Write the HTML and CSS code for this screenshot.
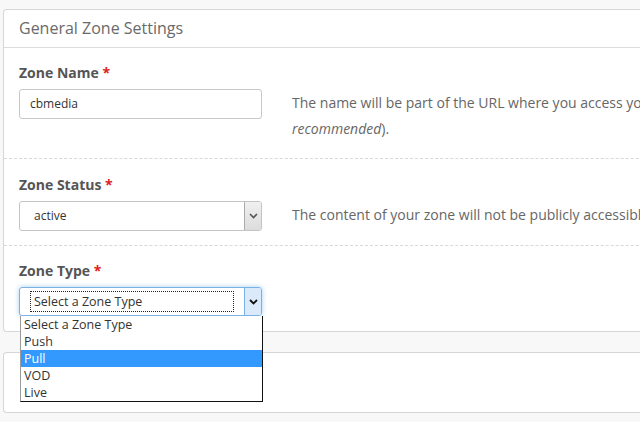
FILE: index.html
```html
<!DOCTYPE html>
<html>
<head>
<meta charset="utf-8">
<link rel="stylesheet" href="styles.css">
</head>
<body>
<div class="page">
  <div class="panel">
    <div class="panel-heading">General Zone Settings</div>
    <div class="form-row">
      <div class="field">
        <label class="label">Zone Name <span class="req">*</span></label>
        <div class="input">cbmedia</div>
      </div>
      <p class="help">The name will be part of the URL where you access your zone content (lowercase letters are<br><em>recommended</em>).</p>
    </div>
    <div class="form-row">
      <div class="field">
        <label class="label">Zone Status <span class="req">*</span></label>
        <div class="select">
          <span class="select-text">active</span>
          <span class="select-btn"><svg width="9" height="6" viewBox="0 0 9 6"><polyline points="1,1 4.5,4.5 8,1" fill="none" stroke="#555" stroke-width="1.6"/></svg></span>
        </div>
      </div>
      <p class="help">The content of your zone will not be publicly accessible until it is active.</p>
    </div>
    <div class="form-row last">
      <div class="field">
        <label class="label">Zone Type <span class="req">*</span></label>
        <div class="select focused">
          <span class="select-text"><span class="focus-ring">Select a Zone Type</span></span>
          <span class="select-btn"><svg width="9" height="6" viewBox="0 0 9 6"><polyline points="1,1 4.5,4.5 8,1" fill="none" stroke="#111" stroke-width="1.8"/></svg></span>
          <ul class="dropdown">
            <li>Select a Zone Type</li>
            <li>Push</li>
            <li class="active">Pull</li>
            <li>VOD</li>
            <li>Live</li>
          </ul>
        </div>
      </div>
    </div>
  </div>
  <div class="panel panel-second"></div>
</div>
</body>
</html>
```
FILE: styles.css
```css
html, body {
  margin: 0;
  padding: 0;
}
body {
  background: #f8f8f8;
  font-family: "Open Sans", "Liberation Sans", sans-serif;
  width: 640px;
  height: 422px;
  overflow: hidden;
}
.page {
  padding: 9px 0 0 3px;
}
.panel {
  width: 720px;
  background: #fff;
  border: 1px solid #d6d6d6;
  border-right: none;
  border-radius: 4px 0 0 4px;
}
.panel-heading {
  height: 37px;
  line-height: 37px;
  padding-left: 15px;
  font-size: 16px;
  color: #6a6a6a;
  border-bottom: 1px solid #dcdcdc;
}
.form-row {
  display: flex;
  gap: 30px;
  padding: 15px 15px 16px 15px;
  border-bottom: 1px dashed #d8d8d8;
}
.form-row:nth-child(3) {
  padding-top: 16px;
  padding-bottom: 14px;
}
.form-row.last {
  border-bottom: none;
  padding-top: 15px;
  padding-bottom: 15px;
}
.field {
  width: 243px;
  flex: none;
}
.label {
  display: block;
  font-size: 14px;
  font-weight: 700;
  line-height: 20px;
  color: #555;
  margin-bottom: 6px;
}
.req {
  color: #e02020;
}
.input {
  box-sizing: border-box;
  height: 30px;
  border: 1px solid #c8c8c8;
  border-radius: 3px;
  padding: 0 10px;
  font-size: 12px;
  line-height: 28px;
  color: #333;
}
.help {
  margin: 0;
  padding-top: 27px;
  font-size: 14px;
  line-height: 26px;
  color: #666;
  white-space: nowrap;
}
.help em {
  font-style: italic;
}
.select {
  position: relative;
  box-sizing: border-box;
  height: 30px;
  border: 1px solid #c4c4c4;
  border-radius: 3px;
  display: flex;
  font-size: 12px;
  color: #333;
}
.select-text {
  flex: 1;
  padding-left: 14px;
  line-height: 28px;
}
.select-btn {
  width: 16px;
  flex: none;
  display: flex;
  align-items: center;
  justify-content: center;
  background: linear-gradient(#f0f0f0, #dcdcdc);
  border-left: 1px solid #aaa;
  border-radius: 0 2px 2px 0;
}
.select.focused {
  border-color: #7ab2e8;
  box-shadow: 0 0 5px rgba(102, 175, 233, 0.6);
  height: 29px;
}
.select.focused .select-text {
  padding: 3px 10px 3px 10px;
  line-height: 19px;
}
.focus-ring {
  display: block;
  border: 1px dotted #222;
  padding-left: 3px;
  height: 19px;
  line-height: 19px;
  font-size: 12.5px;
}
.select.focused .select-btn {
  background: #dbeafb;
  border-left: 1px solid #7ab2e8;
}
.dropdown {
  position: absolute;
  left: 0;
  top: 28px;
  width: 243px;
  box-sizing: border-box;
  margin: 0;
  padding: 0;
  list-style: none;
  background: #fff;
  border-left: 1px solid #9a9a9a;
  border-right: 1px solid #111;
  border-bottom: 1px solid #111;
  z-index: 2;
}
.dropdown li {
  height: 17px;
  line-height: 17px;
  padding-left: 3px;
  font-size: 12.5px;
  color: #333;
}
.dropdown li.active {
  background: #3399ff;
  color: #fff;
}
.panel-second {
  margin-top: 20px;
  height: 59px;
}
```
